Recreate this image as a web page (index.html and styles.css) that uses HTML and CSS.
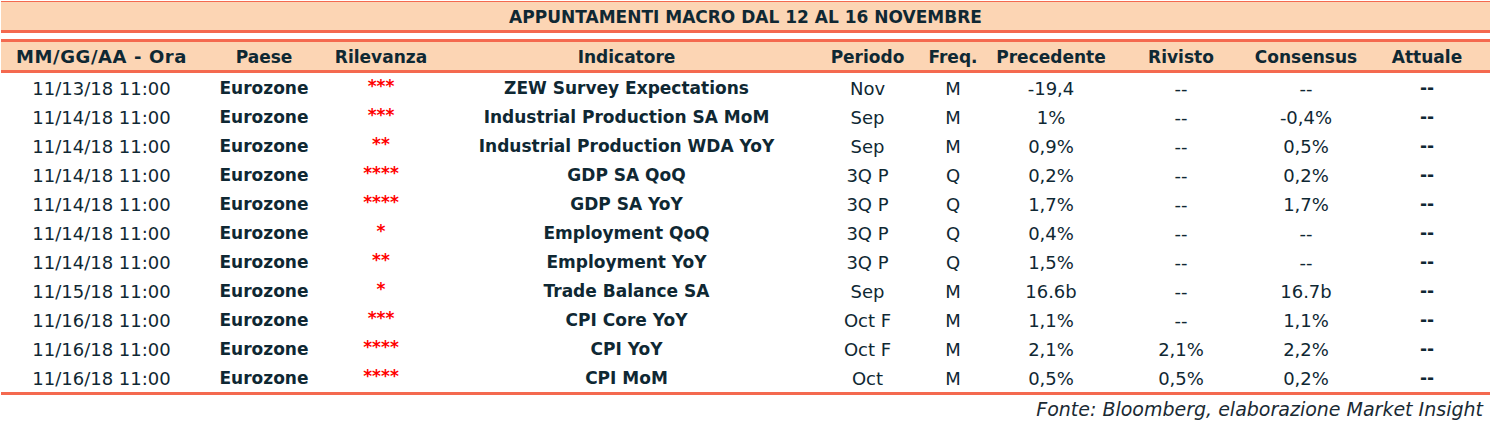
FILE: index.html
```html
<!DOCTYPE html>
<html lang="it">
<head>
<meta charset="utf-8">
<title>Appuntamenti macro</title>
<link rel="stylesheet" href="styles.css">
</head>
<body>
<div class="page">
  <div class="title">APPUNTAMENTI MACRO DAL 12 AL 16 NOVEMBRE</div>
  <div class="table">
    <div class="row head">
      <div class="wide">MM/GG/AA - Ora</div><div>Paese</div><div>Rilevanza</div><div>Indicatore</div><div>Periodo</div><div>Freq.</div><div>Precedente</div><div>Rivisto</div><div>Consensus</div><div>Attuale</div>
    </div>
    <div class="body">
      <div class="row"><div>11/13/18 11:00</div><div class="b">Eurozone</div><div class="stars">***</div><div class="b">ZEW Survey Expectations</div><div>Nov</div><div>M</div><div>-19,4</div><div>--</div><div>--</div><div class="b">--</div></div>
      <div class="row"><div>11/14/18 11:00</div><div class="b">Eurozone</div><div class="stars">***</div><div class="b">Industrial Production SA MoM</div><div>Sep</div><div>M</div><div>1%</div><div>--</div><div>-0,4%</div><div class="b">--</div></div>
      <div class="row"><div>11/14/18 11:00</div><div class="b">Eurozone</div><div class="stars">**</div><div class="b">Industrial Production WDA YoY</div><div>Sep</div><div>M</div><div>0,9%</div><div>--</div><div>0,5%</div><div class="b">--</div></div>
      <div class="row"><div>11/14/18 11:00</div><div class="b">Eurozone</div><div class="stars">****</div><div class="b">GDP SA QoQ</div><div>3Q P</div><div>Q</div><div>0,2%</div><div>--</div><div>0,2%</div><div class="b">--</div></div>
      <div class="row"><div>11/14/18 11:00</div><div class="b">Eurozone</div><div class="stars">****</div><div class="b">GDP SA YoY</div><div>3Q P</div><div>Q</div><div>1,7%</div><div>--</div><div>1,7%</div><div class="b">--</div></div>
      <div class="row"><div>11/14/18 11:00</div><div class="b">Eurozone</div><div class="stars">*</div><div class="b">Employment QoQ</div><div>3Q P</div><div>Q</div><div>0,4%</div><div>--</div><div>--</div><div class="b">--</div></div>
      <div class="row"><div>11/14/18 11:00</div><div class="b">Eurozone</div><div class="stars">**</div><div class="b">Employment YoY</div><div>3Q P</div><div>Q</div><div>1,5%</div><div>--</div><div>--</div><div class="b">--</div></div>
      <div class="row"><div>11/15/18 11:00</div><div class="b">Eurozone</div><div class="stars">*</div><div class="b">Trade Balance SA</div><div>Sep</div><div>M</div><div>16.6b</div><div>--</div><div>16.7b</div><div class="b">--</div></div>
      <div class="row"><div>11/16/18 11:00</div><div class="b">Eurozone</div><div class="stars">***</div><div class="b">CPI Core YoY</div><div>Oct F</div><div>M</div><div>1,1%</div><div>--</div><div>1,1%</div><div class="b">--</div></div>
      <div class="row"><div>11/16/18 11:00</div><div class="b">Eurozone</div><div class="stars">****</div><div class="b">CPI YoY</div><div>Oct F</div><div>M</div><div>2,1%</div><div>2,1%</div><div>2,2%</div><div class="b">--</div></div>
      <div class="row"><div>11/16/18 11:00</div><div class="b">Eurozone</div><div class="stars">****</div><div class="b">CPI MoM</div><div>Oct</div><div>M</div><div>0,5%</div><div>0,5%</div><div>0,2%</div><div class="b">--</div></div>
    </div>
  </div>
  <div class="source">Fonte: Bloomberg, elaborazione Market Insight</div>
</div>
</body>
</html>
```

FILE: styles.css
```css
html, body {
  margin: 0;
  padding: 0;
  background: #ffffff;
}
body {
  font-family: "DejaVu Sans", "Liberation Sans", sans-serif;
  color: #0f2833;
}
.page {
  width: 1489px;
  padding: 1px 0 0 1px;
}
.title {
  background: #fcd5b4;
  border-top: 1px solid #f4694f;
  border-bottom: 3px solid #f4694f;
  height: 28px;
  line-height: 30px;
  text-align: center;
  font-weight: bold;
  font-size: 17px;
}
.table {
  margin-top: 6px;
}
.row {
  display: grid;
  grid-template-columns: 201px 124px 110px 381px 101px 70px 126px 134px 116px 126px;
  height: 29px;
  line-height: 31px;
  text-align: center;
  font-size: 18px;
}
.row.head {
  background: #fcd5b4;
  border-top: 3px solid #f4694f;
  border-bottom: 3px solid #f4694f;
  height: 28px;
  line-height: 30px;
  font-weight: bold;
  font-size: 17px;
}
.row.head .wide {
  font-size: 18px;
  letter-spacing: 0.6px;
}
.body {
  border-bottom: 3px solid #f4694f;
}
.b {
  font-weight: bold;
  font-size: 17px;
}
.stars {
  color: #ff0000;
  font-weight: bold;
  font-size: 17px;
  line-height: 26px;
}
.source {
  text-align: right;
  font-style: italic;
  font-size: 19px;
  padding-right: 7px;
  margin-top: 3px;
  color: #1a2a33;
}
```
